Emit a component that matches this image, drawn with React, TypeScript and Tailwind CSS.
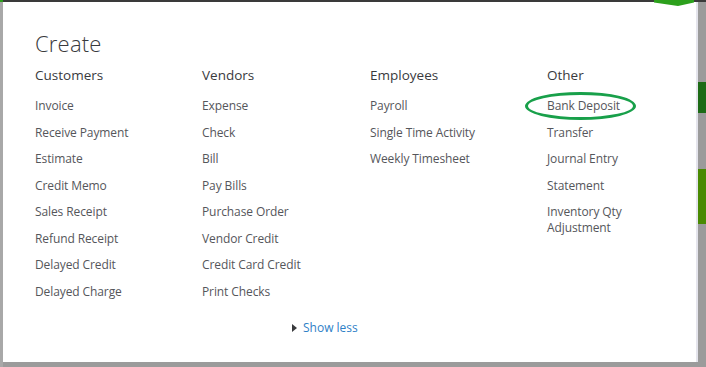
import React from "react";

const columns = [
  {
    title: "Customers",
    width: "w-[167px]",
    items: [
      "Invoice",
      "Receive Payment",
      "Estimate",
      "Credit Memo",
      "Sales Receipt",
      "Refund Receipt",
      "Delayed Credit",
      "Delayed Charge",
    ],
  },
  {
    title: "Vendors",
    width: "w-[168px]",
    items: [
      "Expense",
      "Check",
      "Bill",
      "Pay Bills",
      "Purchase Order",
      "Vendor Credit",
      "Credit Card Credit",
      "Print Checks",
    ],
  },
  {
    title: "Employees",
    width: "w-[177px]",
    items: ["Payroll", "Single Time Activity", "Weekly Timesheet"],
  },
  {
    title: "Other",
    width: "w-[100px]",
    items: ["Bank Deposit", "Transfer", "Journal Entry", "Statement", "Inventory Qty Adjustment"],
  },
];

const App = () => {
  return (
    <div className="w-[706px] h-[367px] bg-[#9b9b9b] flex flex-col overflow-hidden font-['Open_Sans',sans-serif]">
      {/* page top bar */}
      <div className="h-[2px] bg-[#3a3a3a] flex shrink-0">
        <div className="w-[3px] bg-[#2ca01c]" />
        <div className="flex-1" />
        <div className="w-[40px] mr-[12px] relative">
          <div className="absolute left-0 top-0 w-[40px] h-[6px] bg-[#2ca01c] [clip-path:polygon(0_0,100%_0,100%_40%,60%_100%,0_40%)]" />
        </div>
      </div>
      <div className="flex flex-1">
        <div className="w-[3px] bg-[#a8a8a8]" />
        {/* modal */}
        <div className="w-[695px] h-[360px] bg-white flex flex-col pl-[32px] pt-[27px] border-r-2 border-[#e4e4ec]">
          <h1 className="text-[22px] leading-[28px] font-light text-[#393a3d] tracking-[0.2px]">Create</h1>
          <div className="flex mt-[8px]">
            {columns.map((col) => (
              <div key={col.title} className={`${col.width} flex flex-col`}>
                <h2 className="text-[13.5px] leading-[20px] text-[#393a3d]">{col.title}</h2>
                <ul className="flex flex-col gap-[10.5px] mt-[13px]">
                  {col.items.map((item) => (
                    <li key={item} className="text-[12px] leading-[16px] text-[#55565b] tracking-[-0.1px] relative">
                      {item}
                      {item === "Bank Deposit" && (
                        <span className="absolute left-[-22px] top-[-6px] w-[111px] h-[28px] border-[3px] border-[#18a04a] rounded-[50%]" />
                      )}
                    </li>
                  ))}
                </ul>
              </div>
            ))}
          </div>
          <div className="flex-1" />
          <div className="flex items-center pl-[257px] mb-[26px]">
            <svg width="5" height="8" viewBox="0 0 5 8" className="mr-[6px]">
              <path d="M0 0 L5 4 L0 8 Z" fill="#393a3d" />
            </svg>
            <span className="text-[12px] leading-[16px] text-[#2f7fc7]">Show less</span>
          </div>
        </div>
        {/* page background right strip */}
        <div className="flex-1 flex flex-col bg-[#9b9b9b]">
          <div className="h-[80px]" />
          <div className="h-[31px] bg-[#1d6b16]" />
          <div className="h-[56px]" />
          <div className="h-[55px] bg-[#4a8a02]" />
        </div>
      </div>
    </div>
  );
};

export default App;
